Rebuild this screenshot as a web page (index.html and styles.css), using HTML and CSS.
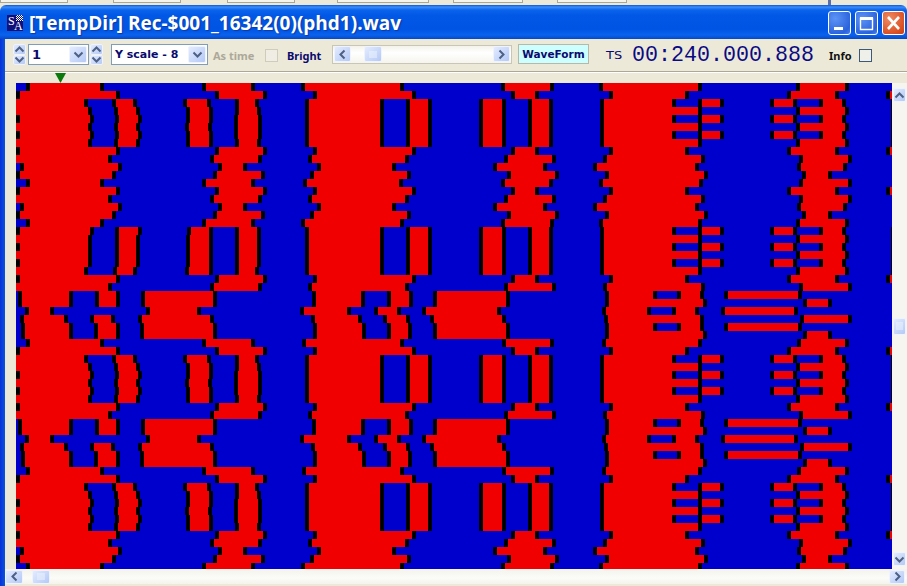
FILE: index.html
```html
<!DOCTYPE html>
<html lang="en">
<head>
    <meta charset="UTF-8">
    <title>[TempDir] Rec-$001_16342(0)(phd1).wav</title>
    <link rel="stylesheet" href="styles.css">
</head>
<body>
    <div class="behind">
        <span class="behind-box w68"></span>
        <span class="behind-box w68 gap45"></span>
        <span class="behind-box w68 gap46"></span>
        <span class="behind-box w92 gap42"></span>
        <span class="behind-box w70 gap24"></span>
        <span class="behind-box w70 gap34"></span>
        <span class="behind-tick"></span>
    </div>

    <div class="titlebar">
        <div class="appicon"><span class="icon-s">S</span><span class="icon-a">A</span></div>
        <div class="title">[TempDir] Rec-$001_16342(0)(phd1).wav</div>
        <div class="winbtns">
            <div class="winbtn">
                <svg width="21" height="22" viewBox="0 0 21 22"><rect x="5" y="15" width="9" height="3" fill="#fff"/></svg>
            </div>
            <div class="winbtn">
                <svg width="21" height="22" viewBox="0 0 21 22"><path d="M4.5 6.5h12v11h-12z" fill="none" stroke="#fff" stroke-width="1.4"/><rect x="4" y="5" width="13" height="3" fill="#fff"/></svg>
            </div>
            <div class="winbtn close">
                <svg width="21" height="22" viewBox="0 0 21 22"><path d="M5 5l11 12M16 5L5 17" stroke="#fff" stroke-width="2.6" fill="none"/></svg>
            </div>
        </div>
    </div>

    <div class="frame">
        <div class="client">
            <div class="toolbar">
                <div class="spinner">
                    <div class="xpbtn"><svg width="11" height="7" viewBox="0 0 11 7"><path d="M1.5 5.5l4-4 4 4" class="chev"/></svg></div>
                    <div class="xpbtn"><svg width="11" height="7" viewBox="0 0 11 7"><path d="M1.5 1.5l4 4 4-4" class="chev"/></svg></div>
                </div>
                <div class="combo combo-num">
                    <span class="combo-text combo-big">1</span>
                    <div class="xpbtn combo-btn"><svg width="11" height="7" viewBox="0 0 11 7"><path d="M1.5 1.5l4 4 4-4" class="chev"/></svg></div>
                </div>
                <div class="spinner spinner-2">
                    <div class="xpbtn"><svg width="11" height="7" viewBox="0 0 11 7"><path d="M1.5 5.5l4-4 4 4" class="chev"/></svg></div>
                    <div class="xpbtn"><svg width="11" height="7" viewBox="0 0 11 7"><path d="M1.5 1.5l4 4 4-4" class="chev"/></svg></div>
                </div>
                <div class="combo combo-scale">
                    <span class="combo-text">Y scale - 8</span>
                    <div class="xpbtn combo-btn"><svg width="11" height="7" viewBox="0 0 11 7"><path d="M1.5 1.5l4 4 4-4" class="chev"/></svg></div>
                </div>
                <span class="label label-off astime">As time</span>
                <span class="check check-off"></span>
                <span class="label bright">Bright</span>
                <div class="slider">
                    <div class="xpbtn slider-btn"><svg width="9" height="11" viewBox="0 0 9 11"><path d="M6.5 1.5l-4 4 4 4" class="chev"/></svg></div>
                    <div class="xpbtn slider-thumb"><svg width="9" height="7" viewBox="0 0 9 7"><path d="M1 0v7M3 0v7M5 0v7M7 0v7" class="grip"/></svg></div>
                    <div class="xpbtn slider-btn slider-end"><svg width="9" height="11" viewBox="0 0 9 11"><path d="M2.5 1.5l4 4-4 4" class="chev"/></svg></div>
                </div>
                <div class="wavebtn">WaveForm</div>
                <span class="ts">TS</span>
                <span class="timecode">00:240.000.888</span>
                <span class="label info">Info</span>
                <span class="check check-on"></span>
            </div>

            <div class="ruler">
                <svg class="marker" width="11" height="10" viewBox="0 0 11 10"><path d="M0 0h11L5.5 10z" fill="#0b7a0b"/></svg>
            </div>

            <div class="viewrow">
                <canvas id="raster" width="876" height="486"></canvas>
                <div class="vscroll">
                    <div class="xpbtn vbtn"><svg width="11" height="7" viewBox="0 0 11 7"><path d="M1.5 5.5l4-4 4 4" class="chev"/></svg></div>
                    <div class="xpbtn vthumb"><svg width="7" height="9" viewBox="0 0 7 9"><path d="M0 1h7M0 3h7M0 5h7M0 7h7" class="grip"/></svg></div>
                    <div class="xpbtn vbtn"><svg width="11" height="7" viewBox="0 0 11 7"><path d="M1.5 1.5l4 4 4-4" class="chev"/></svg></div>
                </div>
            </div>

            <div class="hscroll">
                <div class="xpbtn hbtn"><svg width="9" height="11" viewBox="0 0 9 11"><path d="M6.5 1.5l-4 4 4 4" class="chev"/></svg></div>
                <div class="xpbtn hthumb"><svg width="9" height="7" viewBox="0 0 9 7"><path d="M1 0v7M3 0v7M5 0v7M7 0v7" class="grip"/></svg></div>
                <div class="xpbtn hbtn hbtn-end"><svg width="9" height="11" viewBox="0 0 9 11"><path d="M2.5 1.5l4 4-4 4" class="chev"/></svg></div>
            </div>
        </div>
    </div>

    <script src="raster.js"></script>
</body>
</html>
```

FILE: styles.css
```css
body {
    margin: 0;
    width: 907px;
    height: 586px;
    overflow: hidden;
    background-color: #ECE9D8;
    font-family: Tahoma, "DejaVu Sans", sans-serif;
}
.behind {
    display: flex;
    height: 5px;
}
.behind-box {
    height: 2px;
    background-color: #F4F3EC;
    border: 1px solid #A9A795;
    border-top: 0;
}
.behind-tick {
    width: 3px;
    height: 5px;
    margin-left: 201px;
    background-color: #5A6FA8;
}
.w68 { width: 66px; }
.w92 { width: 90px; }
.w70 { width: 68px; }
.gap45 { margin-left: 45px; }
.gap46 { margin-left: 46px; }
.gap42 { margin-left: 42px; }
.gap24 { margin-left: 24px; }
.gap34 { margin-left: 34px; }

.titlebar {
    display: flex;
    align-items: center;
    height: 34px;
    padding-left: 7px;
    border-radius: 6px 6px 0 0;
    background: linear-gradient(#0A55DF 0, #3C8CF8 2px, #0A64EC 5px, #0258E6 10px, #0054E3 24px, #0A62EE 30px, #0648C8 34px);
}
.appicon {
    position: relative;
    width: 16px;
    height: 16px;
    margin-top: 2px;
    overflow: hidden;
    background-color: #10107A;
    color: #fff;
    font-family: "Liberation Serif", serif;
    font-size: 12px;
    line-height: 12px;
}
.appicon::after {
    content: "";
    position: absolute;
    top: 0;
    right: 0;
    width: 7px;
    height: 6px;
    background: repeating-conic-gradient(#fff 0 25%, #10107A 0 50%) 0 0 / 2px 2px;
}
.icon-s {
    position: absolute;
    left: 1px;
    top: 0;
}
.icon-a {
    position: absolute;
    left: 7px;
    top: 5px;
}
.title {
    margin-left: 6px;
    margin-top: 1px;
    color: #fff;
    font-family: "Open Sans", sans-serif;
    font-weight: 700;
    font-size: 19px;
    text-shadow: 1px 1px 1px #0A3AA8;
    white-space: nowrap;
}
.winbtns {
    display: flex;
    gap: 4px;
    margin-left: auto;
    margin-right: 2px;
    margin-top: 2px;
}
.winbtn {
    width: 23px;
    height: 24px;
    box-sizing: border-box;
    border: 1px solid #fff;
    border-radius: 3px;
    background: radial-gradient(circle at 30% 30%, #5C93F5, #2A62DC 75%, #4A7FEA);
}
.winbtn svg {
    display: block;
}
.winbtn.close {
    background: radial-gradient(circle at 30% 30%, #EE8A64, #DA4E20 75%, #C8401A);
}

.frame {
    height: 547px;
    padding-left: 5px;
    background: linear-gradient(to right, #0831D9 0, #0855DD 5px);
}
.client {
    height: 547px;
    background-color: #ECE9D8;
}

.toolbar {
    display: flex;
    align-items: center;
    height: 32px;
    padding-left: 8px;
    border-bottom: 1px solid #ACA899;
    box-shadow: 0 1px 0 #fff;
}
.xpbtn {
    display: flex;
    align-items: center;
    justify-content: center;
    box-sizing: border-box;
    border: 1px solid #EEF3FE;
    border-radius: 2px;
    background: linear-gradient(135deg, #E3EBFE, #B4C9F6);
}
.xpbtn svg {
    display: block;
}
.chev {
    fill: none;
    stroke: #4D6185;
    stroke-width: 2;
}
.grip {
    fill: none;
    stroke: #EEF4FE;
    stroke-width: 1;
}
.spinner {
    display: flex;
    flex-direction: column;
    width: 15px;
    height: 21px;
    padding-right: 2px;
    box-sizing: border-box;
    margin-top: -1px;
}
.spinner-2 {
    padding: 0 1px 0 1px;
}
.spinner .xpbtn {
    flex: 1;
}
.combo {
    display: flex;
    align-items: center;
    justify-content: space-between;
    height: 21px;
    margin-top: -1px;
    box-sizing: border-box;
    border: 1px solid #7F9DB9;
    background-color: #fff;
    padding: 1px;
}
.combo-num {
    width: 61px;
}
.combo-scale {
    width: 97px;
    margin-left: 7px;
}
.combo-text {
    margin-left: 2px;
    color: #0A0A6E;
    font-weight: 700;
    font-size: 11px;
    font-family: "DejaVu Sans", sans-serif;
    white-space: nowrap;
}
.combo-big {
    font-size: 13px;
}
.combo-btn {
    width: 18px;
    height: 17px;
}
.label {
    font-family: "Noto Sans", sans-serif;
    font-weight: 700;
    font-size: 11px;
    color: #0A0A6E;
    white-space: nowrap;
}
.label-off {
    color: #ACA899;
}
.astime {
    width: 41px;
    margin-left: 5px;
}
.check {
    width: 13px;
    height: 13px;
    box-sizing: border-box;
}
.check-off {
    margin-left: 11px;
    border: 1px solid #CFCCBC;
    background-color: #F0EEE4;
}
.bright {
    width: 33px;
    margin-left: 9px;
}
.slider {
    display: flex;
    align-items: center;
    width: 180px;
    height: 19px;
    margin-left: 12px;
    margin-top: -2px;
    box-sizing: border-box;
    padding: 0 1px;
    border: 1px solid #C8C6B6;
    background: linear-gradient(#F3F2EA, #FFFFFF 40%, #F5F4EE);
}
.slider-btn {
    width: 17px;
    height: 16px;
}
.slider-thumb {
    width: 18px;
    height: 16px;
    margin-left: 13px;
}
.slider-end {
    margin-left: auto;
}
.wavebtn {
    width: 71px;
    height: 20px;
    margin-left: 6px;
    margin-top: -2px;
    box-sizing: border-box;
    border: 1px solid #B9B7A6;
    background-color: #CCFFFF;
    color: #0A0A6E;
    font-family: "DejaVu Sans", sans-serif;
    font-weight: 700;
    font-size: 10.5px;
    line-height: 18px;
    text-align: center;
}
.ts {
    width: 19px;
    margin-left: 17px;
    color: #0A0A6E;
    font-family: "DejaVu Sans", sans-serif;
    font-size: 13px;
    transform: scaleY(0.85);
}
.timecode {
    width: 182px;
    margin-left: 7px;
    color: #0A0A84;
    font-family: "Liberation Mono", monospace;
    font-size: 21.67px;
    white-space: nowrap;
}
.info {
    width: 21px;
    margin-left: 15px;
    color: #111;
}
.check-on {
    margin-left: 9px;
    border: 1px solid #3C5A78;
    background-color: #F0F0EA;
}

.ruler {
    height: 10px;
    margin-top: 1px;
}
.marker {
    display: block;
    margin-left: 50px;
}
.viewrow {
    display: flex;
    height: 486px;
    padding-left: 11px;
}
#raster {
    display: block;
    filter: blur(0.35px);
}
.vscroll {
    display: flex;
    flex-direction: column;
    align-items: center;
    width: 15px;
    box-sizing: border-box;
    padding: 5px 1px 2px;
    background-color: #F6F5EF;
}
.vbtn {
    width: 13px;
    height: 14px;
}
.vthumb {
    width: 13px;
    height: 17px;
    margin-top: 216px;
    margin-bottom: 217px;
}
.hscroll {
    display: flex;
    align-items: center;
    height: 15px;
    background: linear-gradient(#F4F3EC, #FBFBF8 60%, #F4F3EC);
}
.hbtn {
    width: 18px;
    height: 14px;
}
.hthumb {
    width: 18px;
    height: 14px;
    margin-left: 9px;
}
.hbtn-end {
    width: 16px;
    margin-left: auto;
    margin-right: 2px;
}
```

FILE: raster.js
```js
// each row is a list of x positions (page px) where the colour flips, starting from blue
const ROW_H = 8, LEFT = 16;
const RED = '#F00000', BLUE = '#0000CC';

const A  = [26,100,202,251, 301,400,501,550, 599,698,796,845];
const A2 = [26,100,202,251, 303,399,501,549, 599,699,799,848];
const A3 = [26,100,202,251, 302,400,502,550, 602,698,797,845];
const B  = [16,116,215,263, 313,412,511,535, 609,685,787,835,886];
const C  = [-4,108,210,258, 308,405,504,552, 603,701,799,848];
const D  = [20,118,218,243, 317,392,493,543,593, 695,797,843];
const E  = [16,112,213,261, 310,407,507,555, 605,704,802,828];

const S = [
    [18,69,95,116,141,213, 312,361,387,409,433,506, 605,653,677,700,724,798],
    [18,69,95,116,141,213, 312,361,387,409,433,506, 605,703,803,828],
    [25,50,146,197, 300,347,374,397,422,497, 602,647,672,695,721,794],
    [20,64,90,111,138,210, 311,358,383,406,430,502, 604,700,800,848],
    [21,69,94,116,140,213, 313,362,387,408,433,506, 605,653,677,700,724,798],
    [21,69,94,116,140,213, 313,362,387,408,433,506, 605,703,803,828]
];

const MID = [305,380,406,428,479,502,528,549];
const STRIPES = [600,672,698,720,770,793,819,842,891];
const SOLID = [600,698,796,845,891];

const BARS = [
    [-4,84,112,133,183,207,235,255, ...MID, ...STRIPES],
    [-4,88,114,136,186,209,235,257, ...MID, ...SOLID],
    [16,90,115,138,186,209,234,258, ...MID, ...STRIPES],
    [-4,88,114,136,185,208,234,258, ...MID, ...SOLID],
    [16,90,115,138,186,209,234,258, ...MID, ...STRIPES],
    [-4,88,114,136,186,209,235,257, ...MID, ...SOLID]
];
const BARS2 = [
    [16,90,115,138,187,209,235,257, ...MID, ...STRIPES],
    [-4,88,115,136,186,209,235,257, ...MID, ...SOLID],
    [16,88,115,136,186,209,235,257, ...MID, ...STRIPES],
    [-4,88,115,136,186,209,235,257, ...MID, ...SOLID],
    [16,88,115,136,186,209,235,257, ...MID, ...STRIPES],
    [-4,84,113,133,185,209,235,255, ...MID, ...SOLID]
];

const rows = [
    A, B, ...BARS, B, C, D, E, A2, B, C, D, E, A,
    ...BARS2, B, C, ...S, A3, B,
    ...BARS, B, C, ...S, A3, B,
    ...BARS, B, C, D, E, A
];

const canvas = document.getElementById('raster');
const ctx = canvas.getContext('2d');

rows.forEach((flips, r) => {
    const y = r * ROW_H;
    ctx.fillStyle = BLUE;
    ctx.fillRect(0, y, canvas.width, ROW_H);
    flips.forEach((x, i) => {
        const end = i + 1 < flips.length ? flips[i + 1] : LEFT + canvas.width;
        if (i % 2 === 0) {
            ctx.fillStyle = RED;
            ctx.fillRect(x - LEFT, y, end - x, ROW_H);
        }
    });
    // dark edge on every flip
    ctx.fillStyle = '#000';
    flips.forEach(x => ctx.fillRect(x - LEFT, y, 4, ROW_H));
});
```
